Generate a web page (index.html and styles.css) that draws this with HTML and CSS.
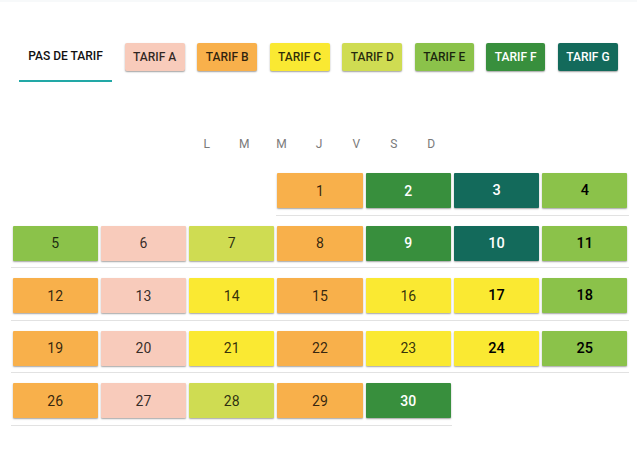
FILE: index.html
```html
<!DOCTYPE html>
<html lang="fr">
<head>
<meta charset="utf-8">
<link rel="stylesheet" href="styles.css">
</head>
<body>
<nav class="tabs">
  <div class="tab active">PAS DE TARIF</div>
  <div class="btn t-a">TARIF A</div>
  <div class="btn t-b">TARIF B</div>
  <div class="btn t-c">TARIF C</div>
  <div class="btn t-d">TARIF D</div>
  <div class="btn t-e">TARIF E</div>
  <div class="btn t-f light">TARIF F</div>
  <div class="btn t-g light">TARIF G</div>
</nav>
<div class="days">
  <span>L</span><span>M</span><span>M</span><span>J</span><span>V</span><span>S</span><span>D</span>
</div>
<div class="calendar">
  <div class="week first">
    <div class="cell"><div class="box t-b">1</div></div>
    <div class="cell"><div class="box t-f light">2</div></div>
    <div class="cell"><div class="box t-g light we">3</div></div>
    <div class="cell"><div class="box t-e we">4</div></div>
  </div>
  <div class="week">
    <div class="cell"><div class="box t-e">5</div></div>
    <div class="cell"><div class="box t-a">6</div></div>
    <div class="cell"><div class="box t-d">7</div></div>
    <div class="cell"><div class="box t-b">8</div></div>
    <div class="cell"><div class="box t-f light">9</div></div>
    <div class="cell"><div class="box t-g light we">10</div></div>
    <div class="cell"><div class="box t-e we">11</div></div>
  </div>
  <div class="week">
    <div class="cell"><div class="box t-b">12</div></div>
    <div class="cell"><div class="box t-a">13</div></div>
    <div class="cell"><div class="box t-c">14</div></div>
    <div class="cell"><div class="box t-b">15</div></div>
    <div class="cell"><div class="box t-c">16</div></div>
    <div class="cell"><div class="box t-c we">17</div></div>
    <div class="cell"><div class="box t-e we">18</div></div>
  </div>
  <div class="week">
    <div class="cell"><div class="box t-b">19</div></div>
    <div class="cell"><div class="box t-a">20</div></div>
    <div class="cell"><div class="box t-c">21</div></div>
    <div class="cell"><div class="box t-b">22</div></div>
    <div class="cell"><div class="box t-c">23</div></div>
    <div class="cell"><div class="box t-c we">24</div></div>
    <div class="cell"><div class="box t-e we">25</div></div>
  </div>
  <div class="week last">
    <div class="cell"><div class="box t-b">26</div></div>
    <div class="cell"><div class="box t-a">27</div></div>
    <div class="cell"><div class="box t-d">28</div></div>
    <div class="cell"><div class="box t-b">29</div></div>
    <div class="cell"><div class="box t-f light">30</div></div>
  </div>
</div>
</body>
</html>
```
FILE: styles.css
```css
* { box-sizing: border-box; }
html, body { margin: 0; padding: 0; background: #fff; }
body {
  font-family: Roboto, "Liberation Sans", Arial, sans-serif;
  color: rgba(0,0,0,0.87);
  width: 637px;
  height: 454px;
  overflow: hidden;
  padding-top: 32px;
  border-top: 2px solid #f7f9fa;
}
.tabs {
  display: flex;
  align-items: center;
  gap: 12.5px;
  padding-left: 19px;
  height: 50px;
  margin-top: -2px;
}
.tab {
  width: 93px;
  height: 50px;
  display: flex;
  align-items: center;
  justify-content: center;
  font-size: 12px;
  font-weight: 500;
  color: #111;
  border-bottom: 2px solid #22a8a6;
}
.btn {
  height: 28px;
  padding: 0 8.5px;
  display: flex;
  align-items: center;
  justify-content: center;
  font-size: 12px;
  font-weight: 500;
  color: rgba(0,0,0,0.82);
  border-radius: 2px;
  box-shadow: 0 1px 2px rgba(0,0,0,0.28), 0 1px 1px rgba(0,0,0,0.12);
}
.t-a { background: #f8cbbb; }
.t-b { background: #f8b04b; }
.t-c { background: #fae932; }
.t-d { background: #cfdc52; }
.t-e { background: #8bc24a; }
.t-f { background: #388f3d; }
.t-g { background: #136a5b; }
.light { color: #fff; }
.days {
  display: flex;
  justify-content: center;
  margin-top: 52px;
  height: 20px;
  align-items: center;
  font-size: 12px;
  color: #7a7a7a;
  padding-left: 1px;
}
.days span {
  width: 37.4px;
  text-align: center;
}
.calendar {
  margin-top: 19px;
  padding-left: 11px;
  width: 629px;
  display: flex;
  flex-direction: column;
}
.week {
  display: flex;
  border-bottom: 1px solid #e2e2e2;
  padding-bottom: 6.5px;
  margin-bottom: 10px;
}
.week.first { align-self: flex-end; }
.week.last { align-self: flex-start; }
.cell {
  width: 88.29px;
  padding: 0 1.6px;
}
.box {
  height: 35px;
  display: flex;
  align-items: center;
  justify-content: center;
  font-size: 14px;
  color: rgba(0,0,0,0.8);
  border-radius: 1px;
  box-shadow: 0 1px 2px rgba(0,0,0,0.28), 0 1px 1px rgba(0,0,0,0.1);
}
.box.light { color: #fff; font-weight: 500; }
.box.we { font-size: 14.5px; font-weight: 500; color: #000; }
.box.light.we { color: #fff; }
```
